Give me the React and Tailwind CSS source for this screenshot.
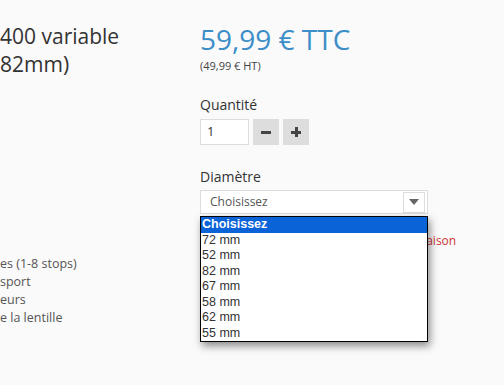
import React from 'react'

const OPTIONS = ['Choisissez', '72 mm', '52 mm', '82 mm', '67 mm', '58 mm', '62 mm', '55 mm']

const FEATURES = ['es (1-8 stops)', 'sport', 'eurs', 'e la lentille']

export default function App() {
  return (
    <div className="w-[504px] h-[385px] overflow-hidden bg-[#fafafa] text-[#333] font-['Open_Sans',sans-serif] flex">
      {/* left column, product title and features */}
      <div className="w-[200px] flex flex-col">
        <h1 className="mt-[22px] text-[21px] leading-[28px] font-normal text-[#333]">
          400 variable
          <br />
          82mm)
        </h1>
        <ul className="mt-[177px] text-[12.5px] leading-[18px] text-[#555]">
          {FEATURES.map(f => (
            <li key={f}>{f}</li>
          ))}
        </ul>
      </div>

      {/* right column, price and options */}
      <div className="flex-1 flex flex-col">
        <p className="mt-[23px] text-[28px] leading-[32px] text-[#3b8ec8]">59,99 € TTC</p>
        <p className="mt-[4px] text-[11px] leading-[13px] text-[#444]">(49,99 € HT)</p>

        <label className="mt-[23px] text-[14px] leading-[20px] text-[#333]">Quantité</label>
        <div className="mt-[4px] flex items-center gap-[4px]">
          <div className="w-[49px] h-[26px] bg-white border border-[#ddd] flex items-center pl-[6px] text-[13px]">1</div>
          <button className="w-[26px] h-[26px] bg-[#ddd] flex items-center justify-center">
            <span className="block w-[10px] h-[3px] bg-[#444]" />
          </button>
          <button className="w-[26px] h-[26px] bg-[#ddd] flex items-center justify-center relative">
            <span className="block w-[10px] h-[3px] bg-[#444]" />
            <span className="absolute w-[3px] h-[10px] bg-[#444]" />
          </button>
        </div>

        <label className="mt-[22px] text-[14px] leading-[20px] text-[#333]">Diamètre</label>
        <div className="relative mt-[3px] w-[228px]">
          <div className="h-[24px] bg-white border border-[#ddd] flex items-center justify-between pl-[9px] pr-[2px] text-[12px] text-[#555]">
            <span>Choisissez</span>
            <span className="w-[22px] h-[21px] border border-[#ddd] flex items-center justify-center">
              <svg width="10" height="6" viewBox="0 0 10 6"><path d="M0 0h10L5 6z" fill="#666" /></svg>
            </span>
          </div>

          <div className="ml-[206px] mt-[20px] text-[12px] leading-[14px] text-[#cc3333] whitespace-nowrap">Livraison</div>

          {/* open dropdown list */}
          <ul className="absolute left-0 top-[26px] w-[228px] bg-white border border-black shadow-[2px_4px_8px_rgba(0,0,0,0.45)] font-['Liberation_Sans',Arial,sans-serif] text-[12.5px] leading-[15.5px] text-[#333]">
            {OPTIONS.map((o, i) => (
              <li key={o} className={i === 0 ? 'bg-[#0b63d8] text-white font-bold pl-[1px]' : 'pl-[1px]'}>{o}</li>
            ))}
          </ul>
        </div>
      </div>
    </div>
  )
}
